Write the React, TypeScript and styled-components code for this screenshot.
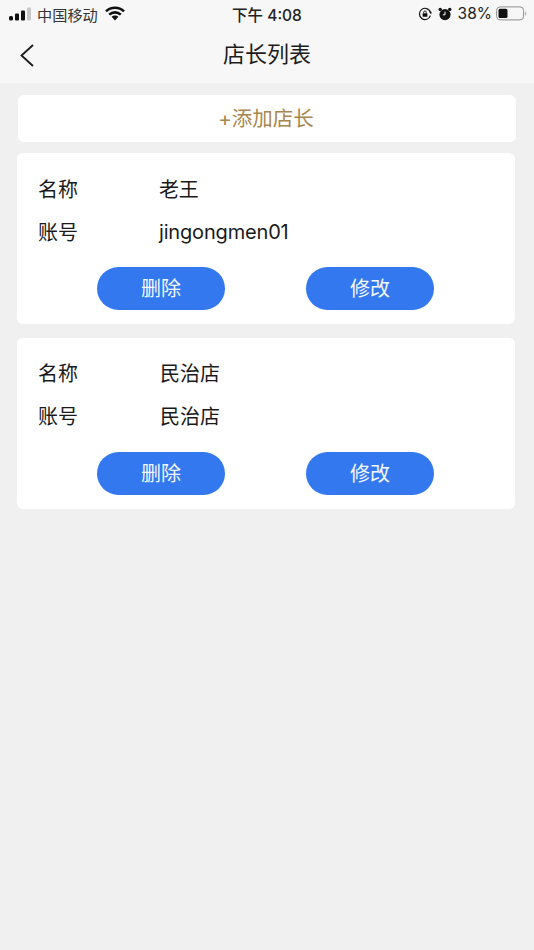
import styled, { createGlobalStyle } from "styled-components";

const GlobalStyle = createGlobalStyle`
  html, body {
    margin: 0;
    padding: 0;
    background: #f0f0f0;
  }
  body {
    font-family: "Inter", "Liberation Sans", "Noto Sans CJK SC", sans-serif;
  }
`;

const stores = [
  { name: "老王", account: "jingongmen01", valueGap: 0, tracking: -0.17, inset: 14 },
  { name: "民治店", account: "民治店", valueGap: 1, tracking: 0, inset: 13 },
];

export default function App() {
  return (
    <Page>
      <GlobalStyle />
      <Header>
        <StatusBar>
          <StatusLeft>
            <SignalIcon />
            <Carrier>中国移动</Carrier>
            <WifiIcon />
          </StatusLeft>
          <Clock>下午 4:08</Clock>
          <StatusRight>
            <LockIcon />
            <AlarmIcon />
            <Percent>38%</Percent>
            <BatteryIcon />
          </StatusRight>
        </StatusBar>
        <NavBar>
          <BackButton>
            <svg width="16" height="26" viewBox="0 0 16 26" fill="none">
              <path d="M15 3 3.5 13.5 15 24" stroke="#1a1a1a" strokeWidth="1.8" />
            </svg>
          </BackButton>
          <Title>店长列表</Title>
        </NavBar>
      </Header>
      <Content>
        <AddButton>+添加店长</AddButton>
        {stores.map((store) => (
          <Card key={store.name} $inset={store.inset}>
            <Row>
              <Label>名称</Label>
              <Value $shift={store.valueGap} $tracking={store.tracking}>{store.name}</Value>
            </Row>
            <Row>
              <Label>账号</Label>
              <Value $shift={store.valueGap} $tracking={store.tracking}>{store.account}</Value>
            </Row>
            <Actions $inset={store.inset}>
              <ActionButton>删除</ActionButton>
              <ActionButton>修改</ActionButton>
            </Actions>
          </Card>
        ))}
      </Content>
    </Page>
  );
}

function SignalIcon() {
  return (
    <svg width="23" height="14" viewBox="0 0 23 14">
      <rect x="0" y="9" width="4" height="4.5" rx="1.5" fill="#111" />
      <rect x="6" y="6.5" width="4" height="7" rx="1" fill="#111" />
      <rect x="12" y="3.5" width="4" height="10" rx="1" fill="#111" />
      <rect x="18" y="0.5" width="4" height="13" rx="1" fill="#c8c8c8" />
    </svg>
  );
}

function WifiIcon() {
  return (
    <svg width="20" height="15" viewBox="0 0 20 15" fill="none">
      <path d="M1 5.4c5-4.8 13-4.8 18 0" stroke="#111" strokeWidth="2.6" />
      <path d="M4.2 8.6c3.3-3 8.3-3 11.6 0" stroke="#111" strokeWidth="2.6" />
      <path d="M6.6 10.8 10 14.6l3.4-3.8c-1.8-1.7-5-1.7-6.8 0Z" fill="#111" />
    </svg>
  );
}

function LockIcon() {
  return (
    <svg width="14" height="14" viewBox="0 0 14 14" fill="none">
      <path d="M12.4 8.6A5.6 5.6 0 1 1 12.4 5.2" stroke="#111" strokeWidth="1.2" />
      <path d="m11 4.6 2.6.2-.4 2.6Z" fill="#111" />
      <rect x="4.6" y="6.2" width="4.8" height="3.6" rx="0.6" fill="#111" />
      <path d="M5.6 6.4V5.4a1.4 1.4 0 0 1 2.8 0v1" stroke="#111" strokeWidth="0.9" />
    </svg>
  );
}

function AlarmIcon() {
  return (
    <svg width="14" height="14" viewBox="0 0 14 14" fill="none">
      <circle cx="7" cy="7.6" r="5.6" fill="#111" />
      <path d="M7 4.6v3.2H4.8" stroke="#fff" strokeWidth="1" />
      <circle cx="2.2" cy="2.4" r="1.7" fill="#111" />
      <circle cx="11.8" cy="2.4" r="1.7" fill="#111" />
    </svg>
  );
}

function BatteryIcon() {
  return (
    <svg width="31" height="15" viewBox="0 0 31 15" fill="none">
      <rect x="0.6" y="0.9" width="27" height="13" rx="3.6" stroke="#8e8e8e" strokeWidth="1" />
      <rect x="2.5" y="2.8" width="9" height="9.2" rx="1.6" fill="#111" />
      <path d="M29.4 5.4c1 .4 1.2 3.6 0 4.2Z" fill="#8e8e8e" />
    </svg>
  );
}

const Page = styled.div`
  width: 534px;
  height: 950px;
  overflow: hidden;
  background: #f0f0f0;
`;

const Header = styled.header`
  height: 83px;
  background: #f7f7f7;
`;

const StatusBar = styled.div`
  height: 27px;
  padding: 0 3px;
  display: grid;
  grid-template-columns: 1fr auto 1fr;
  align-items: center;
  color: #111;
`;

const StatusLeft = styled.div`
  display: flex;
  align-items: center;
  gap: 5px;
  padding-left: 6px;
`;

const Carrier = styled.span`
  font-size: 15.2px;
  color: #333;
  margin-right: 2px;
`;

const Clock = styled.span`
  font-size: 15.5px;
  font-weight: 500;
  color: #222;
`;

const StatusRight = styled.div`
  display: flex;
  align-items: center;
  justify-content: flex-end;
  gap: 6px;
  padding-right: 4px;
`;

const Percent = styled.span`
  font-size: 15.5px;
  color: #222;
  margin-right: -2px;
`;

const NavBar = styled.nav`
  position: relative;
  height: 56px;
  display: flex;
  align-items: center;
  justify-content: center;
  padding-bottom: 7px;
  box-sizing: border-box;
`;

const BackButton = styled.span`
  position: absolute;
  left: 18px;
  top: 15px;
  display: flex;
`;

const Title = styled.h1`
  margin: 0;
  font-size: 22px;
  font-weight: 400;
  color: #1c1c1c;
`;

const Content = styled.main`
  display: flex;
  flex-direction: column;
  padding: 12px 19px 0 17px;
  gap: 14px;
`;

const AddButton = styled.div`
  height: 47px;
  box-sizing: border-box;
  margin: 0 -1px -3px 1px;
  padding: 0 2px 4px 0;
  display: flex;
  align-items: center;
  justify-content: center;
  border-radius: 6px;
  background: #fff;
  font-size: 20.5px;
  color: #a8864c;
`;

const Card = styled.section<{ $inset: number }>`
  height: 171px;
  box-sizing: border-box;
  padding: ${(p) => p.$inset}px 21px 0;
  border-radius: 6px;
  background: #fff;
`;

const Row = styled.div`
  height: 43px;
  display: flex;
  align-items: center;
  font-size: 20px;
  color: #1a1a1a;
`;

const Label = styled.span`
  width: 121px;
`;

const Value = styled.span<{ $shift: number; $tracking: number }>`
  margin-left: ${(p) => p.$shift}px;
  letter-spacing: ${(p) => p.$tracking}px;
`;

const Actions = styled.div<{ $inset: number }>`
  display: flex;
  justify-content: center;
  gap: 81px;
  margin: ${(p) => 28 - p.$inset}px 0 0 -1px;
`;

const ActionButton = styled.button`
  width: 128px;
  height: 43px;
  padding: 0 0 2px;
  border: 0;
  border-radius: 22px;
  background: #3478f0;
  color: #f4f8ff;
  font: inherit;
  font-size: 20px;
`;
